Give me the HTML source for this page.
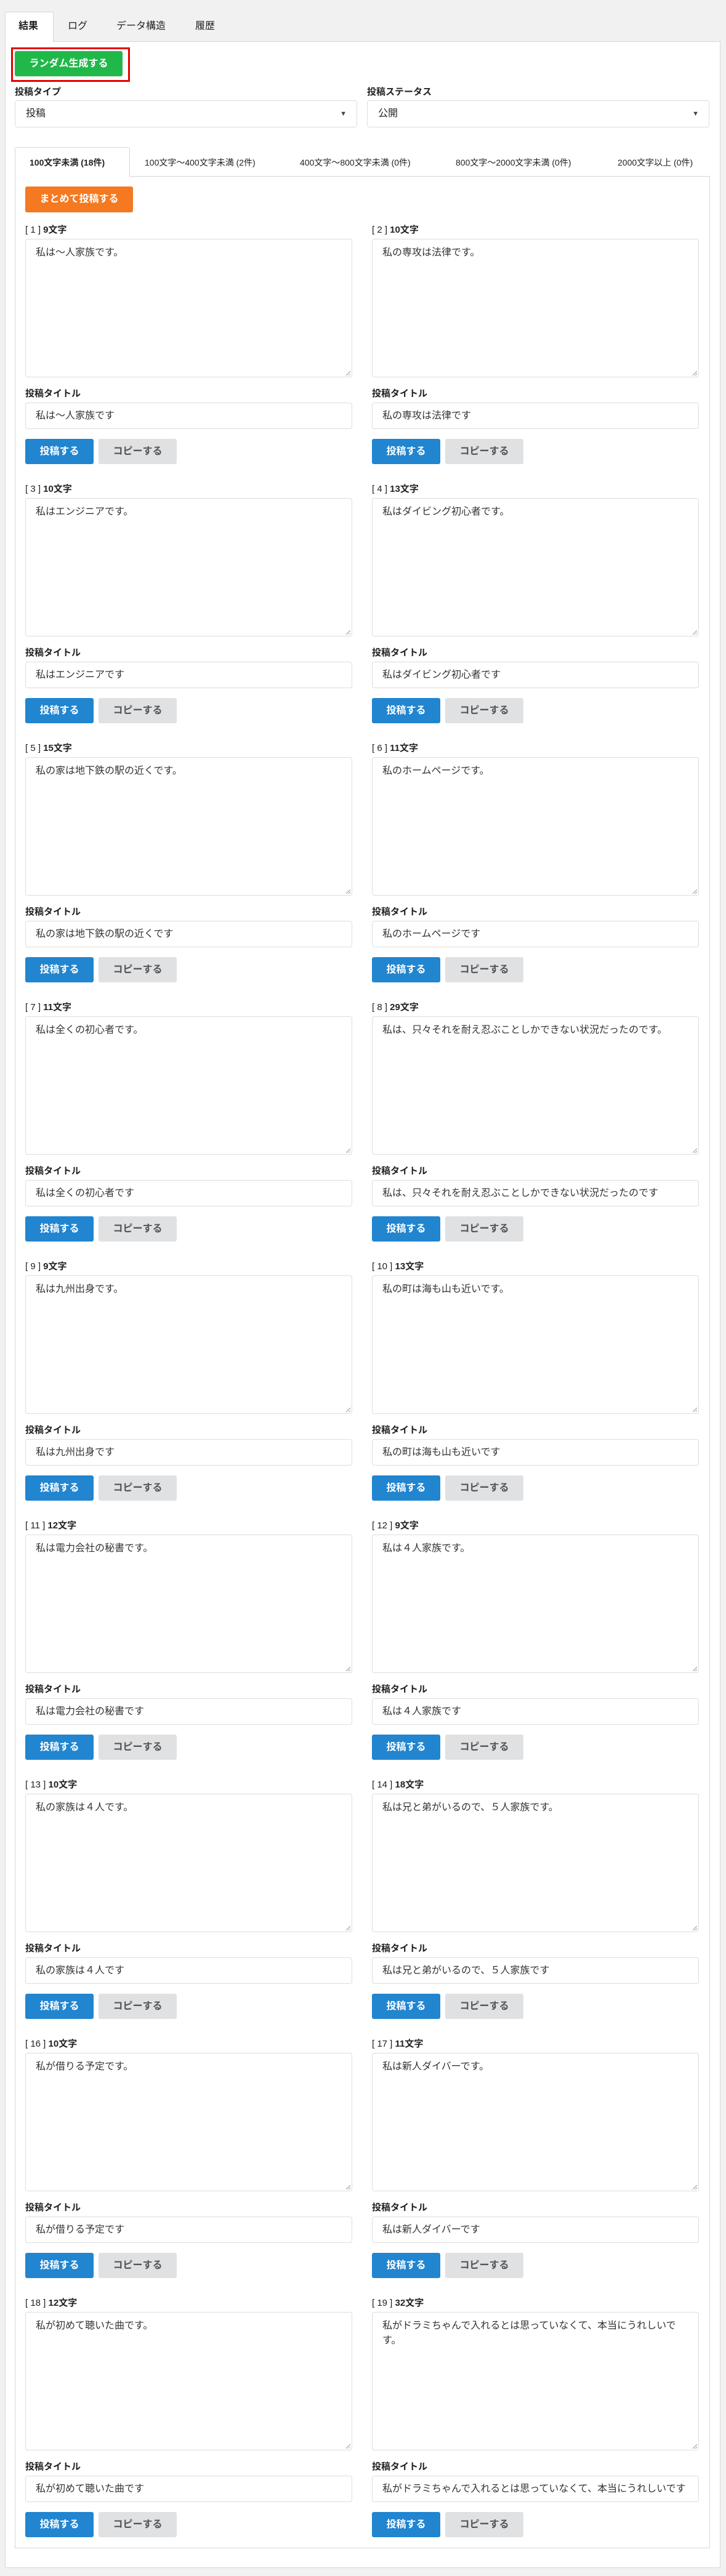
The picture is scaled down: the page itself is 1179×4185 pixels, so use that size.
<!DOCTYPE html>
<html><head><meta charset="utf-8"><style>
*{box-sizing:border-box}
body{margin:0;width:1179px;height:4185px;background:#f1f1f1;font-family:"Liberation Sans","Noto Sans CJK JP",sans-serif;color:#222;position:relative;overflow:hidden}
.a{position:absolute}
.tab{position:absolute;font-size:16px;line-height:20px}
.it{font-size:14px!important}
.outer{position:absolute;left:8px;top:67px;width:1162px;height:4105px;background:#fff;border:1px solid #d6d6d6;border-radius:0 0 3px 3px}
.lbl{position:absolute;font-size:15px;font-weight:bold;line-height:20px;color:#222}
.sel{position:absolute;height:44px;border:1px solid #ddd;border-radius:4px;background:#fff;font-size:16px;line-height:42px;padding-left:17px}
.sel span{position:absolute;right:16px;top:0;font-size:11px;color:#444}
.ta{position:absolute;width:531px;height:225px;border:1px solid #ddd;border-radius:4px;background:#fff;font-size:16px;line-height:24px;padding:10px 16px;color:#333}
.ta:after{content:"";position:absolute;right:2px;bottom:2px;width:7px;height:7px;background:linear-gradient(135deg,transparent 45%,#999 45%,#999 55%,transparent 55%,transparent 75%,#999 75%,#999 85%,transparent 85%)}
.in{position:absolute;width:531px;height:43px;border:1px solid #ddd;border-radius:4px;background:#fff;font-size:16px;line-height:41px;padding-left:16px;color:#333;white-space:nowrap;overflow:hidden}
.bb{position:absolute;width:111px;height:41px;background:#2185d0;color:#fff;font-weight:bold;font-size:16px;line-height:41px;text-align:center;border-radius:3px}
.bg{position:absolute;width:127px;height:41px;background:#e0e1e2;color:#555;font-weight:bold;font-size:16px;line-height:41px;text-align:center;border-radius:3px}
</style></head><body>
<div class="a" style="left:8px;top:19px;width:79px;height:49px;background:#fff;border:1px solid #d6d6d6;border-bottom:none;border-radius:3px 3px 0 0;z-index:2"></div>
<div class="tab" style="left:30px;top:33px;font-weight:bold;z-index:3">結果</div>
<div class="tab" style="left:110px;top:33px">ログ</div>
<div class="tab" style="left:189px;top:33px">データ構造</div>
<div class="tab" style="left:317px;top:33px">履歴</div>
<div class="outer"></div>
<div class="a" style="left:18px;top:77px;width:193px;height:56px;border:3px solid #e60000"></div>
<div class="a" style="left:24px;top:83px;width:175px;height:41px;background:#21b84a;border-radius:3px;color:#fff;font-weight:bold;font-size:16px;line-height:41px;text-align:center">ランダム生成する</div>
<div class="lbl" style="left:24px;top:140px">投稿タイプ</div>
<div class="lbl" style="left:596px;top:140px">投稿ステータス</div>
<div class="sel" style="left:24px;top:163px;width:556px">投稿<span>▼</span></div>
<div class="sel" style="left:596px;top:163px;width:556px">公開<span>▼</span></div>
<div class="a" style="left:24px;top:286px;width:1129px;height:3854px;border:1px solid #d6d6d6"></div>
<div class="a" style="left:24px;top:239px;width:187px;height:48px;background:#fff;border:1px solid #d6d6d6;border-bottom:none;border-radius:3px 3px 0 0"></div>
<div class="tab it" style="left:48px;top:254px;font-weight:bold">100文字未満 (18件)</div>
<div class="tab it" style="left:235px;top:254px">100文字～400文字未満 (2件)</div>
<div class="tab it" style="left:487px;top:254px">400文字～800文字未満 (0件)</div>
<div class="tab it" style="left:740px;top:254px">800文字～2000文字未満 (0件)</div>
<div class="tab it" style="left:1003px;top:254px">2000文字以上 (0件)</div>
<div class="a" style="left:41px;top:303px;width:175px;height:42px;background:#f47920;border-radius:3px;color:#fff;font-weight:bold;font-size:16px;line-height:42px;text-align:center">まとめて投稿する</div>

<div id="cards"></div>
<script>
var d=[["1","9","私は〜人家族です。"],["2","10","私の専攻は法律です。"],["3","10","私はエンジニアです。"],["4","13","私はダイビング初心者です。"],["5","15","私の家は地下鉄の駅の近くです。"],["6","11","私のホームページです。"],["7","11","私は全くの初心者です。"],["8","29","私は、只々それを耐え忍ぶことしかできない状況だったのです。"],["9","9","私は九州出身です。"],["10","13","私の町は海も山も近いです。"],["11","12","私は電力会社の秘書です。"],["12","9","私は４人家族です。"],["13","10","私の家族は４人です。"],["14","18","私は兄と弟がいるので、５人家族です。"],["16","10","私が借りる予定です。"],["17","11","私は新人ダイバーです。"],["18","12","私が初めて聴いた曲です。"],["19","32","私がドラミちゃんで入れるとは思っていなくて、本当にうれしいです。"]];
var h="";
d.forEach(function(e,i){var r=Math.floor(i/2),x=i%2?604:41,y=421*r;
h+='<div class="lbl" style="left:'+x+'px;top:'+(364+y)+'px"><span style="font-weight:normal">[ '+e[0]+' ]</span> '+e[1]+'文字</div>';
h+='<div class="ta" style="left:'+x+'px;top:'+(388+y)+'px">'+e[2]+'</div>';
h+='<div class="lbl" style="left:'+x+'px;top:'+(630+y)+'px">投稿タイトル</div>';
h+='<div class="in" style="left:'+x+'px;top:'+(654+y)+'px">'+e[2].replace(/。$/,"")+'</div>';
h+='<div class="bb" style="left:'+x+'px;top:'+(713+y)+'px">投稿する</div>';
h+='<div class="bg" style="left:'+(x+119)+'px;top:'+(713+y)+'px">コピーする</div>';});
document.getElementById("cards").innerHTML=h;
</script>
</body></html>
